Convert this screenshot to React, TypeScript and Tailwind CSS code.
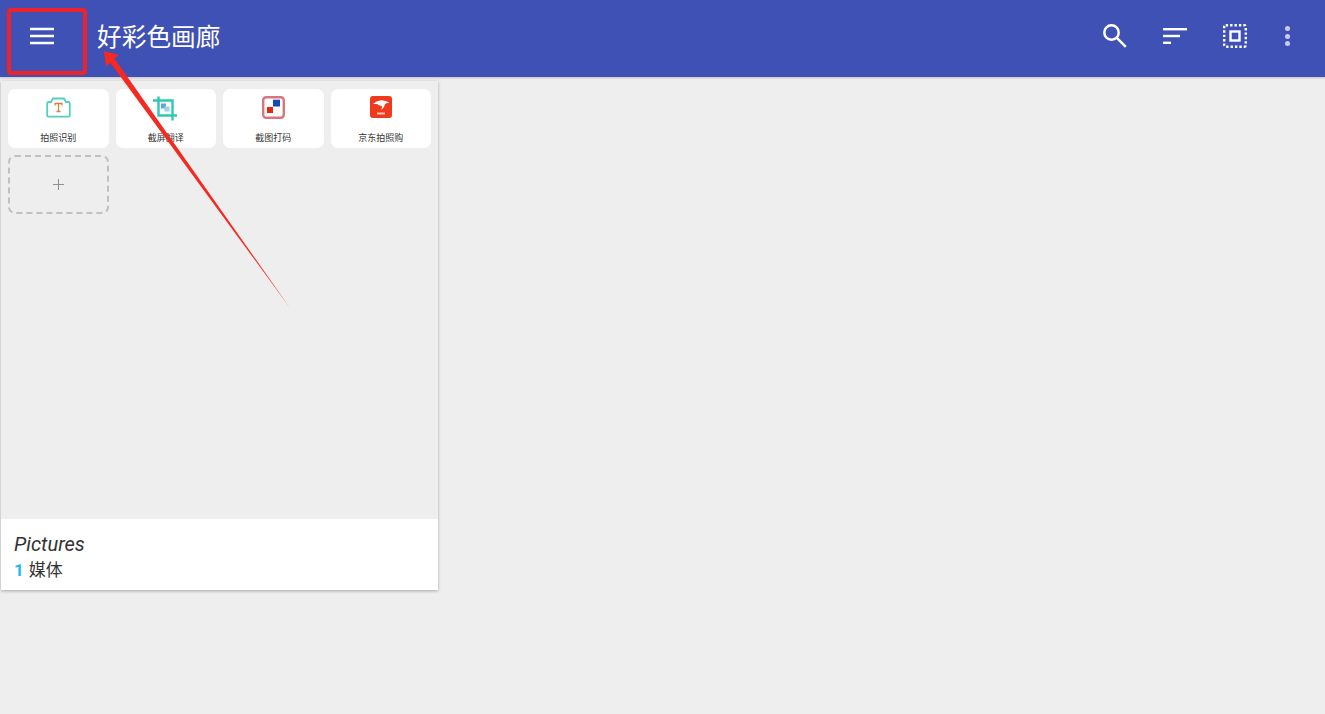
import { ReactNode } from "react";

const cjk = "font-['Roboto','Noto_Sans_CJK_SC',sans-serif]";

function Tile({ label, children }: { label: string; children: ReactNode }) {
  return (
    <div className="flex h-[59px] flex-col items-center rounded-[7px] bg-white">
      <div className="mt-[4px] flex h-[28px] w-[28px] items-center justify-center">{children}</div>
      <span className="mt-[10.5px] text-[9px] leading-[12px] text-[#333]">{label}</span>
    </div>
  );
}

function CameraIcon() {
  return (
    <svg width="25" height="22" viewBox="0 0 25 22">
      <path
        d="M1.2 7.5 Q1.2 6 2.7 6 H5 L7 2.5 H18 L20 6 H22.3 Q23.8 6 23.8 7.5 V19.5 Q23.8 20.7 22.8 20.7 H2.2 Q1.2 20.7 1.2 19.5 Z"
        fill="#fff"
        stroke="#52cfc4"
        strokeWidth="1.8"
      />
      <path d="M9 9.5 V7.5 H16 V9.5 M12.5 7.5 V15.5 M10.5 15.5 H14.5" fill="none" stroke="#d9823f" strokeWidth="1.3" />
    </svg>
  );
}

function CropIcon() {
  return (
    <svg width="26" height="27" viewBox="0 0 26 27">
      <path d="M5.5 2.5 V21.5 H24 M0 6.5 H19.5 V26.5" fill="none" stroke="#2fc8b0" strokeWidth="2.4" />
      <rect x="8" y="9.5" width="5" height="5" fill="#5aa7d8" />
      <rect x="11.5" y="12.5" width="5" height="5" fill="#9fd0ea" />
    </svg>
  );
}

function QrIcon() {
  return (
    <svg width="23" height="23" viewBox="0 0 23 23">
      <rect x="1.2" y="1.2" width="20.6" height="20.6" rx="3" fill="#fff" stroke="#d8747e" strokeWidth="2.4" />
      <rect x="11" y="3.7" width="7" height="6.8" fill="#1748b8" />
      <rect x="5" y="11" width="6" height="6" fill="#dd2a10" />
    </svg>
  );
}

function JdIcon() {
  return (
    <svg width="22" height="22" viewBox="0 0 22 22">
      <rect width="22" height="22" rx="3" fill="#ef3a1d" />
      <path
        d="M3 8 Q8 3.5 13 4.5 Q17 4.5 19.5 7 L16 7.2 Q14.5 8.5 14 11 L11.5 14 L12 10 Q8 9.5 7 8 Z"
        fill="#fff"
      />
      <rect x="7" y="16.5" width="8" height="2" fill="#ffc4b6" />
    </svg>
  );
}

export default function App() {
  return (
    <div className={`relative flex h-[714px] w-[1325px] flex-col overflow-hidden bg-[#eeeeee] ${cjk}`}>
      {/* Toolbar */}
      <header className="flex h-[77px] shrink-0 items-center bg-[#3f51b5] shadow-[0_1px_2px_rgba(0,0,0,0.2)]">
        <div className="flex w-[84px] shrink-0 justify-center">
          <svg width="24" height="18" viewBox="0 0 24 18" className="mb-[5px]">
            <path d="M0 2h24M0 9h24M0 16h24" stroke="#fff" strokeWidth="2.4" />
          </svg>
        </div>
        <h1 className="ml-[13px] text-[24.7px] font-normal leading-none text-white">好彩色画廊</h1>
        <div className="ml-auto flex items-center gap-[36px] pb-[5px] pr-[35px]">
          <svg width="24" height="24" viewBox="0 0 24 24" fill="none" stroke="#fff" strokeWidth="2.5">
            <circle cx="8.5" cy="8.5" r="7.2" />
            <path d="M13.8 13.8 L22.8 22.8" />
          </svg>
          <svg width="24" height="16" viewBox="0 0 24 16" fill="#fff">
            <rect x="0" y="0" width="24" height="2.4" />
            <rect x="0" y="6.8" width="17" height="2.4" />
            <rect x="0" y="13.6" width="8" height="2.4" />
          </svg>
          <svg width="24" height="24" viewBox="0 0 24 24" fill="none">
            <rect x="1.2" y="1.2" width="21.6" height="21.6" rx="1.5" stroke="#fff" strokeWidth="2.4" strokeDasharray="2.4 2" />
            <rect x="7.5" y="7.5" width="9" height="9" stroke="#fff" strokeWidth="2.4" />
          </svg>
          <div className="ml-[2px] flex w-[5px] flex-col gap-[2.5px]">
            <span className="h-[5px] w-[5px] rounded-full bg-[#c9cef0]" />
            <span className="h-[5px] w-[5px] rounded-full bg-[#c9cef0]" />
            <span className="h-[5px] w-[5px] rounded-full bg-[#c9cef0]" />
          </div>
        </div>
      </header>

      {/* Album card */}
      <main className="ml-[1px] mt-[4px] flex h-[509px] w-[437px] flex-col shadow-[0_1px_3px_rgba(0,0,0,0.3)]">
        <div className="flex-1 bg-[#eeeeee] px-[7px] pt-[8px]">
          <div className="grid grid-cols-4 gap-x-[7px] gap-y-[6.5px]">
            <Tile label="拍照识别"><CameraIcon /></Tile>
            <Tile label="截屏翻译"><CropIcon /></Tile>
            <Tile label="截图打码"><QrIcon /></Tile>
            <Tile label="京东拍照购"><JdIcon /></Tile>
            <div className="flex h-[59px] items-center justify-center rounded-[7px] border-2 border-dashed border-[#c0c0c0]">
              <svg width="11" height="11" viewBox="0 0 11 11">
                <path d="M5.5 0v11M0 5.5h11" stroke="#8f8f8f" strokeWidth="1" />
              </svg>
            </div>
          </div>
        </div>
        <div className="flex h-[71px] flex-col bg-white pl-[13px] pt-[12.5px] text-[#333]">
          <div className="text-[20px] font-normal italic leading-[25px]">Pictures</div>
          <div className="mt-[1px] text-[17px] leading-[25px]">
            <span className="mr-[5px] font-bold text-[#29b6f6]">1</span>媒体
          </div>
        </div>
      </main>

      {/* Annotation over the screenshot */}
      <div className="absolute left-[7px] top-[8px] h-[67px] w-[80px] rounded-[4px] border-4 border-[#ee2228]" />
      <svg className="absolute left-0 top-0" width="1325" height="714" viewBox="0 0 1325 714">
        <path d="M104 51 L119 55 L114.5 58.5 L290 308 L110.5 63 L106 66 Z" fill="#f5291f" />
      </svg>
    </div>
  );
}
